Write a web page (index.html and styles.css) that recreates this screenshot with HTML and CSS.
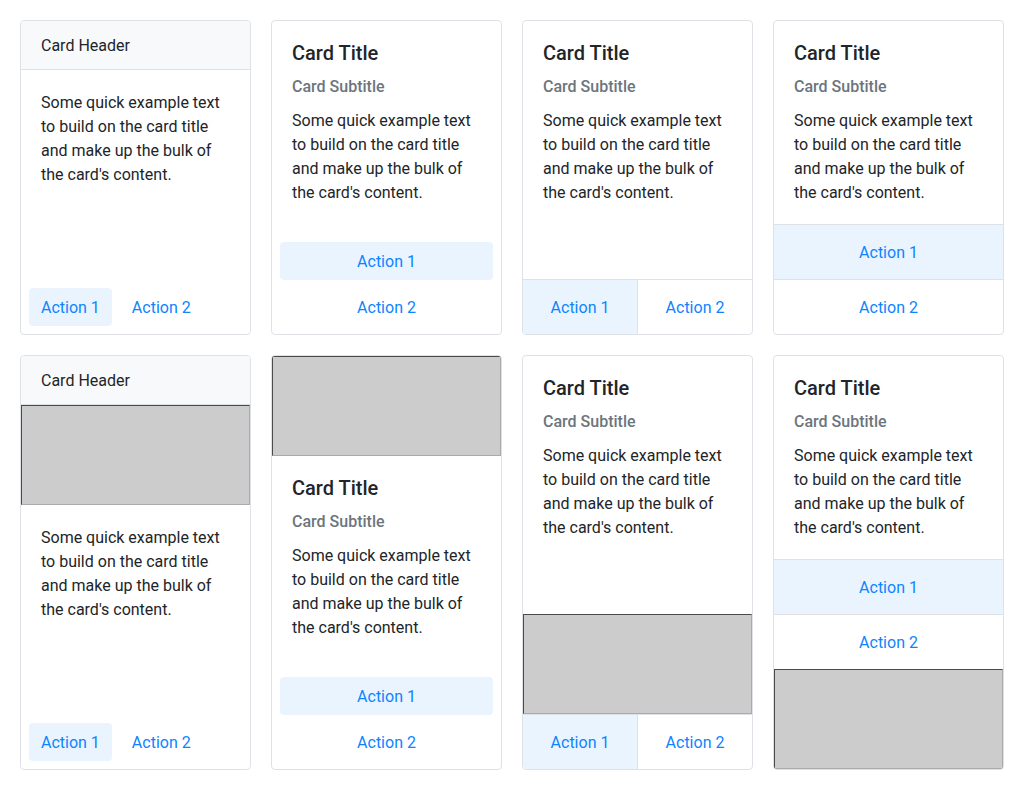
FILE: index.html
```html
<!DOCTYPE html>
<html>
<head>
<meta charset="utf-8">
<link rel="stylesheet" href="styles.css">
</head>
<body>
<div class="grid">
  <div class="card">
    <div class="card-header">Card Header</div>
    <div class="card-body">
      <p class="card-text">Some quick example text to build on the card title and make up the bulk of the card's content.</p>
    </div>
    <div class="actions actions-inline">
      <a class="btn active">Action 1</a>
      <a class="btn">Action 2</a>
    </div>
  </div>

  <div class="card">
    <div class="card-body">
      <h2 class="card-title">Card Title</h2>
      <h3 class="card-subtitle">Card Subtitle</h3>
      <p class="card-text">Some quick example text to build on the card title and make up the bulk of the card's content.</p>
    </div>
    <div class="actions actions-stacked">
      <a class="btn active">Action 1</a>
      <a class="btn">Action 2</a>
    </div>
  </div>

  <div class="card">
    <div class="card-body">
      <h2 class="card-title">Card Title</h2>
      <h3 class="card-subtitle">Card Subtitle</h3>
      <p class="card-text">Some quick example text to build on the card title and make up the bulk of the card's content.</p>
    </div>
    <div class="actions actions-full actions-row">
      <a class="cell active">Action 1</a>
      <a class="cell">Action 2</a>
    </div>
  </div>

  <div class="card">
    <div class="card-body">
      <h2 class="card-title">Card Title</h2>
      <h3 class="card-subtitle">Card Subtitle</h3>
      <p class="card-text">Some quick example text to build on the card title and make up the bulk of the card's content.</p>
    </div>
    <div class="actions actions-full actions-col">
      <a class="cell active">Action 1</a>
      <a class="cell">Action 2</a>
    </div>
  </div>

  <div class="card">
    <div class="card-header">Card Header</div>
    <div class="card-media"></div>
    <div class="card-body">
      <p class="card-text">Some quick example text to build on the card title and make up the bulk of the card's content.</p>
    </div>
    <div class="actions actions-inline">
      <a class="btn active">Action 1</a>
      <a class="btn">Action 2</a>
    </div>
  </div>

  <div class="card">
    <div class="card-media"></div>
    <div class="card-body">
      <h2 class="card-title">Card Title</h2>
      <h3 class="card-subtitle">Card Subtitle</h3>
      <p class="card-text">Some quick example text to build on the card title and make up the bulk of the card's content.</p>
    </div>
    <div class="actions actions-stacked">
      <a class="btn active">Action 1</a>
      <a class="btn">Action 2</a>
    </div>
  </div>

  <div class="card">
    <div class="card-body">
      <h2 class="card-title">Card Title</h2>
      <h3 class="card-subtitle">Card Subtitle</h3>
      <p class="card-text">Some quick example text to build on the card title and make up the bulk of the card's content.</p>
    </div>
    <div class="card-media"></div>
    <div class="actions actions-full actions-row">
      <a class="cell active">Action 1</a>
      <a class="cell">Action 2</a>
    </div>
  </div>

  <div class="card">
    <div class="card-body">
      <h2 class="card-title">Card Title</h2>
      <h3 class="card-subtitle">Card Subtitle</h3>
      <p class="card-text">Some quick example text to build on the card title and make up the bulk of the card's content.</p>
    </div>
    <div class="actions actions-full actions-col">
      <a class="cell active">Action 1</a>
      <a class="cell">Action 2</a>
    </div>
    <div class="card-media"></div>
  </div>
</div>
</body>
</html>
```

FILE: styles.css
```css
* { box-sizing: border-box; }
html, body { margin: 0; padding: 0; background: #fff; }
body {
  font-family: Roboto, "Liberation Sans", sans-serif;
  font-size: 16px;
  line-height: 24px;
  color: #212529;
}
.grid {
  display: grid;
  grid-template-columns: repeat(4, 231px);
  column-gap: 20px;
  row-gap: 20px;
  padding: 20px;
  align-items: stretch;
}
.card {
  display: flex;
  flex-direction: column;
  border: 1px solid #dee2e6;
  border-radius: 4px;
  overflow: hidden;
  background: #fff;
}
.card-header {
  background: #f8f9fa;
  border-bottom: 1px solid #dee2e6;
  padding: 13px 20px 11px;
  height: 49px;
  flex: none;
}
.card-body {
  padding: 21px 20px 19px;
  flex: 1 0 auto;
}
.card-title {
  margin: -1px 0 10px;
  font-size: 20px;
  font-weight: 500;
  line-height: 24px;
}
.card-subtitle {
  margin: 0 0 10px;
  font-size: 16px;
  font-weight: 500;
  line-height: 24px;
  color: #6c757d;
}
.card-text { margin: 0; }
.card-media {
  height: 100px;
  flex: none;
  background: #cccccc;
  border-top: 1px solid #4a4a4a;
  border-left: 1px solid #4a4a4a;
  border-right: 1px solid #aaaaaa;
  border-bottom: 1px solid #aaaaaa;
}
.actions { flex: none; }
.btn, .cell {
  color: #0d84ff;
  text-decoration: none;
  cursor: pointer;
  display: flex;
  align-items: center;
  justify-content: center;
  padding-top: 2px;
}
.btn {
  height: 38px;
  padding-left: 12px;
  padding-right: 12px;
  border-radius: 4px;
}
.active { background: #eaf4ff; }
.actions-inline {
  display: flex;
  gap: 8px;
  padding: 8px;
}
.actions-stacked {
  display: flex;
  flex-direction: column;
  gap: 8px;
  padding: 8px;
}
.actions-full { border-top: 1px solid #dee2e6; }
.cell { height: 54px; }
.actions-row { display: flex; }
.actions-row .cell { flex: 1 1 0; }
.actions-row .cell + .cell { border-left: 1px solid #dee2e6; }
.actions-col { display: flex; flex-direction: column; }
.actions-col .cell + .cell { border-top: 1px solid #dee2e6; height: 55px; }
```
